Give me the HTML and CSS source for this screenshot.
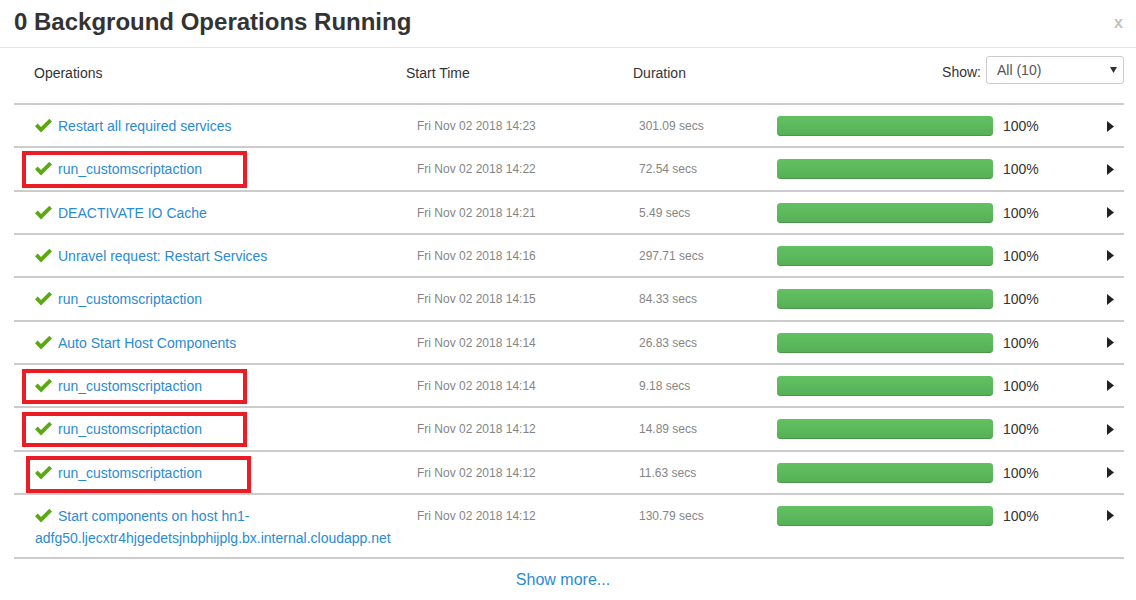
FILE: index.html
```html
<!DOCTYPE html>
<html>
<head>
<meta charset="utf-8">
<link rel="stylesheet" href="styles.css">
</head>
<body>
<div class="modal">
  <div class="modal-header">
    <h1 class="title">0 Background Operations Running</h1>
    <span class="close">x</span>
  </div>
  <div class="table">
    <div class="thead">
      <div class="th th-op">Operations</div>
      <div class="th">Start Time</div>
      <div class="th">Duration</div>
      <div class="th th-show">
        <span class="show-label">Show:</span>
        <div class="select"><span>All (10)</span><svg class="caret" width="7" height="6" viewBox="0 0 7 6"><polygon points="0,0 7,0 3.5,6" fill="#333"/></svg></div>
      </div>
    </div>

    <div class="row">
      <div class="op"><svg class="ok" width="17" height="14" viewBox="0 0 17 14"><polygon points="0,7.3 2.7,4.6 6,7.9 14.3,-0.2 17,2.5 6,13.6" fill="#5ba813"/></svg><a class="link">Restart all required services</a></div>
      <div class="time">Fri Nov 02 2018 14:23</div>
      <div class="dur">301.09 secs</div>
      <div class="bar"><div class="fill" style="width:100%"></div></div>
      <div class="end"><span class="pct">100%</span><svg class="arrow" width="7" height="11" viewBox="0 0 7 11"><polygon points="0,0 7,5.5 0,11" fill="#222"/></svg></div>
    </div>

    <div class="row">
      <div class="op"><svg class="ok" width="17" height="14" viewBox="0 0 17 14"><polygon points="0,7.3 2.7,4.6 6,7.9 14.3,-0.2 17,2.5 6,13.6" fill="#5ba813"/></svg><a class="link">run_customscriptaction</a></div>
      <div class="time">Fri Nov 02 2018 14:22</div>
      <div class="dur">72.54 secs</div>
      <div class="bar"><div class="fill" style="width:100%"></div></div>
      <div class="end"><span class="pct">100%</span><svg class="arrow" width="7" height="11" viewBox="0 0 7 11"><polygon points="0,0 7,5.5 0,11" fill="#222"/></svg></div>
      <div class="mark"></div>
    </div>

    <div class="row">
      <div class="op"><svg class="ok" width="17" height="14" viewBox="0 0 17 14"><polygon points="0,7.3 2.7,4.6 6,7.9 14.3,-0.2 17,2.5 6,13.6" fill="#5ba813"/></svg><a class="link">DEACTIVATE IO Cache</a></div>
      <div class="time">Fri Nov 02 2018 14:21</div>
      <div class="dur">5.49 secs</div>
      <div class="bar"><div class="fill" style="width:100%"></div></div>
      <div class="end"><span class="pct">100%</span><svg class="arrow" width="7" height="11" viewBox="0 0 7 11"><polygon points="0,0 7,5.5 0,11" fill="#222"/></svg></div>
    </div>

    <div class="row">
      <div class="op"><svg class="ok" width="17" height="14" viewBox="0 0 17 14"><polygon points="0,7.3 2.7,4.6 6,7.9 14.3,-0.2 17,2.5 6,13.6" fill="#5ba813"/></svg><a class="link">Unravel request: Restart Services</a></div>
      <div class="time">Fri Nov 02 2018 14:16</div>
      <div class="dur">297.71 secs</div>
      <div class="bar"><div class="fill" style="width:100%"></div></div>
      <div class="end"><span class="pct">100%</span><svg class="arrow" width="7" height="11" viewBox="0 0 7 11"><polygon points="0,0 7,5.5 0,11" fill="#222"/></svg></div>
    </div>

    <div class="row">
      <div class="op"><svg class="ok" width="17" height="14" viewBox="0 0 17 14"><polygon points="0,7.3 2.7,4.6 6,7.9 14.3,-0.2 17,2.5 6,13.6" fill="#5ba813"/></svg><a class="link">run_customscriptaction</a></div>
      <div class="time">Fri Nov 02 2018 14:15</div>
      <div class="dur">84.33 secs</div>
      <div class="bar"><div class="fill" style="width:100%"></div></div>
      <div class="end"><span class="pct">100%</span><svg class="arrow" width="7" height="11" viewBox="0 0 7 11"><polygon points="0,0 7,5.5 0,11" fill="#222"/></svg></div>
    </div>

    <div class="row">
      <div class="op"><svg class="ok" width="17" height="14" viewBox="0 0 17 14"><polygon points="0,7.3 2.7,4.6 6,7.9 14.3,-0.2 17,2.5 6,13.6" fill="#5ba813"/></svg><a class="link">Auto Start Host Components</a></div>
      <div class="time">Fri Nov 02 2018 14:14</div>
      <div class="dur">26.83 secs</div>
      <div class="bar"><div class="fill" style="width:100%"></div></div>
      <div class="end"><span class="pct">100%</span><svg class="arrow" width="7" height="11" viewBox="0 0 7 11"><polygon points="0,0 7,5.5 0,11" fill="#222"/></svg></div>
    </div>

    <div class="row">
      <div class="op"><svg class="ok" width="17" height="14" viewBox="0 0 17 14"><polygon points="0,7.3 2.7,4.6 6,7.9 14.3,-0.2 17,2.5 6,13.6" fill="#5ba813"/></svg><a class="link">run_customscriptaction</a></div>
      <div class="time">Fri Nov 02 2018 14:14</div>
      <div class="dur">9.18 secs</div>
      <div class="bar"><div class="fill" style="width:100%"></div></div>
      <div class="end"><span class="pct">100%</span><svg class="arrow" width="7" height="11" viewBox="0 0 7 11"><polygon points="0,0 7,5.5 0,11" fill="#222"/></svg></div>
      <div class="mark mark-b"></div>
    </div>

    <div class="row">
      <div class="op"><svg class="ok" width="17" height="14" viewBox="0 0 17 14"><polygon points="0,7.3 2.7,4.6 6,7.9 14.3,-0.2 17,2.5 6,13.6" fill="#5ba813"/></svg><a class="link">run_customscriptaction</a></div>
      <div class="time">Fri Nov 02 2018 14:12</div>
      <div class="dur">14.89 secs</div>
      <div class="bar"><div class="fill" style="width:100%"></div></div>
      <div class="end"><span class="pct">100%</span><svg class="arrow" width="7" height="11" viewBox="0 0 7 11"><polygon points="0,0 7,5.5 0,11" fill="#222"/></svg></div>
      <div class="mark mark-b"></div>
    </div>

    <div class="row">
      <div class="op"><svg class="ok" width="17" height="14" viewBox="0 0 17 14"><polygon points="0,7.3 2.7,4.6 6,7.9 14.3,-0.2 17,2.5 6,13.6" fill="#5ba813"/></svg><a class="link">run_customscriptaction</a></div>
      <div class="time">Fri Nov 02 2018 14:12</div>
      <div class="dur">11.63 secs</div>
      <div class="bar"><div class="fill" style="width:100%"></div></div>
      <div class="end"><span class="pct">100%</span><svg class="arrow" width="7" height="11" viewBox="0 0 7 11"><polygon points="0,0 7,5.5 0,11" fill="#222"/></svg></div>
      <div class="mark mark-c"></div>
    </div>

    <div class="row row-last">
      <div class="op"><svg class="ok" width="17" height="14" viewBox="0 0 17 14"><polygon points="0,7.3 2.7,4.6 6,7.9 14.3,-0.2 17,2.5 6,13.6" fill="#5ba813"/></svg><a class="link">Start components on host hn1-adfg50.ljecxtr4hjgedetsjnbphijplg.bx.internal.cloudapp.net</a></div>
      <div class="time">Fri Nov 02 2018 14:12</div>
      <div class="dur">130.79 secs</div>
      <div class="bar"><div class="fill" style="width:100%"></div></div>
      <div class="end"><span class="pct">100%</span><svg class="arrow" width="7" height="11" viewBox="0 0 7 11"><polygon points="0,0 7,5.5 0,11" fill="#222"/></svg></div>
    </div>

    <div class="more"><a class="link more-link">Show more...</a></div>
  </div>
</div>
</body>
</html>
```

FILE: styles.css
```css
* { box-sizing: border-box; }

html, body {
  margin: 0;
  padding: 0;
  background: #fff;
}

body {
  font-family: "Liberation Sans", Arial, sans-serif;
  color: #333;
  font-size: 14px;
}

.modal {
  width: 1136px;
}

.modal-header {
  display: flex;
  justify-content: space-between;
  align-items: flex-start;
  padding: 9px 13px 12px 14px;
  border-bottom: 1px solid #e5e5e5;
}

.title {
  margin: 0;
  font-size: 24px;
  line-height: 26px;
  font-weight: bold;
  color: #333;
}

.close {
  font-size: 16px;
  font-weight: bold;
  line-height: 20px;
  margin-top: 4px;
  color: #c2c2c2;
}

.table {
  margin: 0 12px 0 14px;
}

.thead {
  display: grid;
  grid-template-columns: 392px 227px 144px 1fr;
  height: 57px;
  padding-top: 8px;
  border-bottom: 2px solid #cccccc;
}

.th {
  padding-top: 7px;
  line-height: 20px;
  font-size: 14px;
  color: #333;
}

.th-op {
  padding-left: 20px;
}

.th-show {
  display: flex;
  justify-content: flex-end;
  align-items: flex-start;
  padding-top: 0;
}

.show-label {
  margin-top: 6px;
  margin-right: 5px;
  line-height: 20px;
}

.select {
  width: 138px;
  height: 28px;
  border: 1px solid #cccccc;
  border-radius: 3px;
  display: flex;
  align-items: center;
  justify-content: space-between;
  padding: 0 6px 0 10px;
  color: #555;
  font-size: 14px;
  background: #fff;
}

.caret {
  display: block;
}

.row {
  position: relative;
  display: grid;
  grid-template-columns: 403px 222px 138px 216px 1fr;
  align-items: start;
  min-height: 43.33px;
  padding-top: 10px;
  border-bottom: 2px solid #cccccc;
}

.row-last {
  padding-bottom: 8px;
}

.op {
  padding-left: 21px;
  padding-right: 10px;
  line-height: 22px;
  font-size: 14px;
}

.ok {
  vertical-align: -2px;
  margin-right: 6px;
}

.link {
  color: #2a8bd2;
  text-decoration: none;
}

.time, .dur {
  font-size: 12px;
  line-height: 22px;
  color: #858585;
}

.bar {
  margin-top: 1px;
  height: 20px;
  border-radius: 3px;
  background: #f5f5f5;
  overflow: hidden;
}

.fill {
  height: 100%;
  border-radius: 3px;
  background: linear-gradient(to bottom, #62c162 0%, #56b056 100%);
  box-shadow: inset 0 -1px 0 rgba(0, 0, 0, 0.15);
}

.end {
  display: flex;
  justify-content: space-between;
  align-items: center;
  height: 22px;
  padding-left: 10px;
  padding-right: 10px;
}

.pct {
  font-size: 14px;
  color: #333;
}

.arrow {
  display: block;
}

.mark {
  position: absolute;
  left: 8px;
  top: 3px;
  width: 225px;
  height: 37px;
  border: 4px solid #ec1c24;
}

.mark-b {
  top: 4px;
  height: 35px;
}

.mark-c {
  left: 12px;
  top: 4px;
  height: 37px;
}

.more {
  text-align: center;
  padding-top: 10px;
  padding-right: 12px;
  line-height: 22px;
  font-size: 16px;
}
```
